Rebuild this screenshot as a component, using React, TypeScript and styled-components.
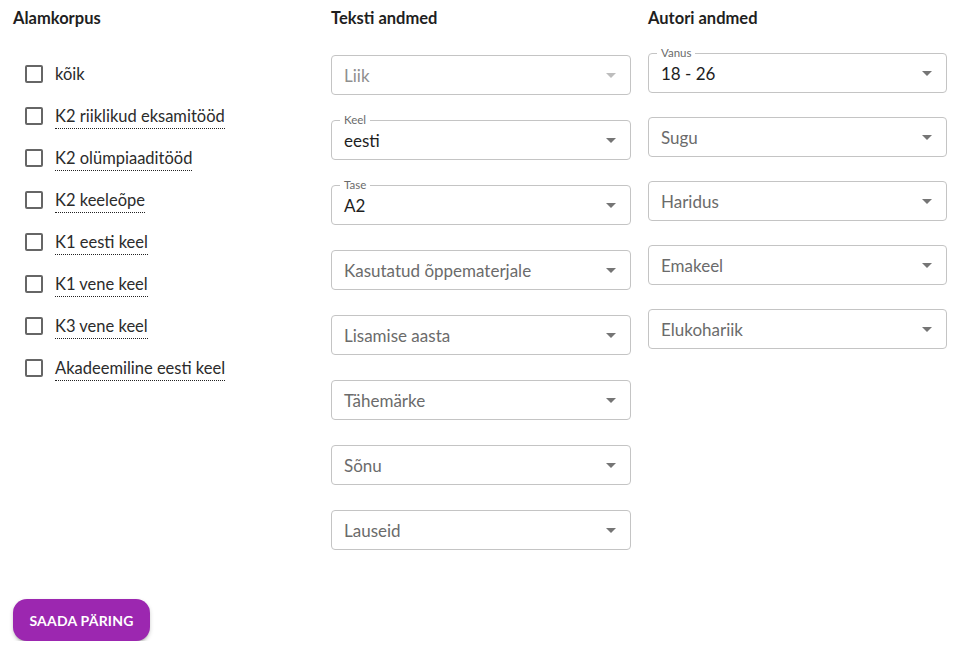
import React from "react";
import styled, { createGlobalStyle } from "styled-components";

const Global = createGlobalStyle`
  html, body { margin: 0; padding: 0; background: #fff; }
  body { font-family: Lato, "Noto Sans", sans-serif; color: #222; }
  * { box-sizing: border-box; }
`;

const Page = styled.div`
  padding: 8px 0 0 13px;
  width: 977px;
`;

const Columns = styled.div`
  display: grid;
  grid-template-columns: 318px 317px 298px;
  align-items: start;
`;

const Column = styled.div<{ $gap: number; $top: number }>`
  display: flex;
  flex-direction: column;
  gap: ${(p) => p.$gap}px;
  & > *:nth-child(2) { margin-top: ${(p) => p.$top}px; }
`;

const Heading = styled.h3`
  margin: 0;
  font-size: 16.5px;
  font-weight: 700;
  line-height: 20px;
  color: #1f1f1f;
`;

const CheckRow = styled.label`
  display: flex;
  align-items: center;
  gap: 12px;
  height: 20px;
  padding-left: 12px;
  cursor: pointer;
`;

const Box = styled.span`
  width: 18px;
  height: 18px;
  border: 2px solid #666;
  border-radius: 2px;
  flex: none;
`;

const CheckText = styled.span<{ $dotted: boolean }>`
  font-size: 16.5px;
  color: #2b2b2b;
  line-height: 20px;
  border-bottom: 1px dotted ${(p) => (p.$dotted ? "#222" : "transparent")};
  padding-bottom: 2px;
  margin-top: 3px;
`;

const SelectBox = styled.div<{ $w: number }>`
  position: relative;
  width: ${(p) => p.$w}px;
  height: 40px;
  border: 1px solid #c4c4c4;
  border-radius: 4px;
  display: flex;
  align-items: center;
  justify-content: space-between;
  padding: 0 13px 0 12px;
`;

const SelectText = styled.span<{ $kind: "placeholder" | "value" | "disabled" }>`
  font-size: 17px;
  color: ${(p) => (p.$kind === "value" ? "#1e1e1e" : p.$kind === "disabled" ? "#8f8f8f" : "#6b6b6b")};
`;

const FloatLabel = styled.span`
  position: absolute;
  top: -8px;
  left: 8px;
  padding: 0 4px;
  background: #fff;
  font-size: 11.5px;
  line-height: 14px;
  color: #6b6b6b;
`;

const Arrow = styled.span<{ $disabled?: boolean }>`
  width: 0;
  height: 0;
  border-left: 5px solid transparent;
  border-right: 5px solid transparent;
  border-top: 5px solid ${(p) => (p.$disabled ? "#bdbdbd" : "#757575")};
  margin-right: 1px;
`;

const Button = styled.button`
  margin-top: 49px;
  width: 137px;
  height: 42px;
  border: none;
  border-radius: 14px;
  background: #9c27b0;
  color: #fff;
  font-family: Lato, "Noto Sans", sans-serif;
  font-weight: 700;
  font-size: 14px;
  letter-spacing: 0.2px;
  box-shadow: 0 3px 3px -2px rgba(0,0,0,0.25), 0 2px 4px rgba(0,0,0,0.18);
  cursor: pointer;
`;

type Sel = { label: string; value?: string; disabled?: boolean };

const Select = ({ s, w }: { s: Sel; w: number }) => (
  <SelectBox $w={w}>
    {s.value && <FloatLabel>{s.label}</FloatLabel>}
    <SelectText $kind={s.value ? "value" : s.disabled ? "disabled" : "placeholder"}>
      {s.value ?? s.label}
    </SelectText>
    <Arrow $disabled={s.disabled} />
  </SelectBox>
);

const checks = [
  "kõik",
  "K2 riiklikud eksamitööd",
  "K2 olümpiaaditööd",
  "K2 keeleõpe",
  "K1 eesti keel",
  "K1 vene keel",
  "K3 vene keel",
  "Akadeemiline eesti keel",
];

const teksti: Sel[] = [
  { label: "Liik", disabled: true },
  { label: "Keel", value: "eesti" },
  { label: "Tase", value: "A2" },
  { label: "Kasutatud õppematerjale" },
  { label: "Lisamise aasta" },
  { label: "Tähemärke" },
  { label: "Sõnu" },
  { label: "Lauseid" },
];

const autori: Sel[] = [
  { label: "Vanus", value: "18 - 26" },
  { label: "Sugu" },
  { label: "Haridus" },
  { label: "Emakeel" },
  { label: "Elukohariik" },
];

export default function App() {
  return (
    <Page>
      <Global />
      <Columns>
        <Column $gap={22} $top={14}>
          <Heading>Alamkorpus</Heading>
          {checks.map((c, i) => (
            <CheckRow key={c}>
              <Box />
              <CheckText $dotted={i > 0}>{c}</CheckText>
            </CheckRow>
          ))}
        </Column>
        <Column $gap={25} $top={2}>
          <Heading>Teksti andmed</Heading>
          {teksti.map((s) => (
            <Select key={s.label} s={s} w={300} />
          ))}
        </Column>
        <Column $gap={24} $top={1}>
          <Heading>Autori andmed</Heading>
          {autori.map((s) => (
            <Select key={s.label} s={s} w={299} />
          ))}
        </Column>
      </Columns>
      <Button>SAADA PÄRING</Button>
    </Page>
  );
}
